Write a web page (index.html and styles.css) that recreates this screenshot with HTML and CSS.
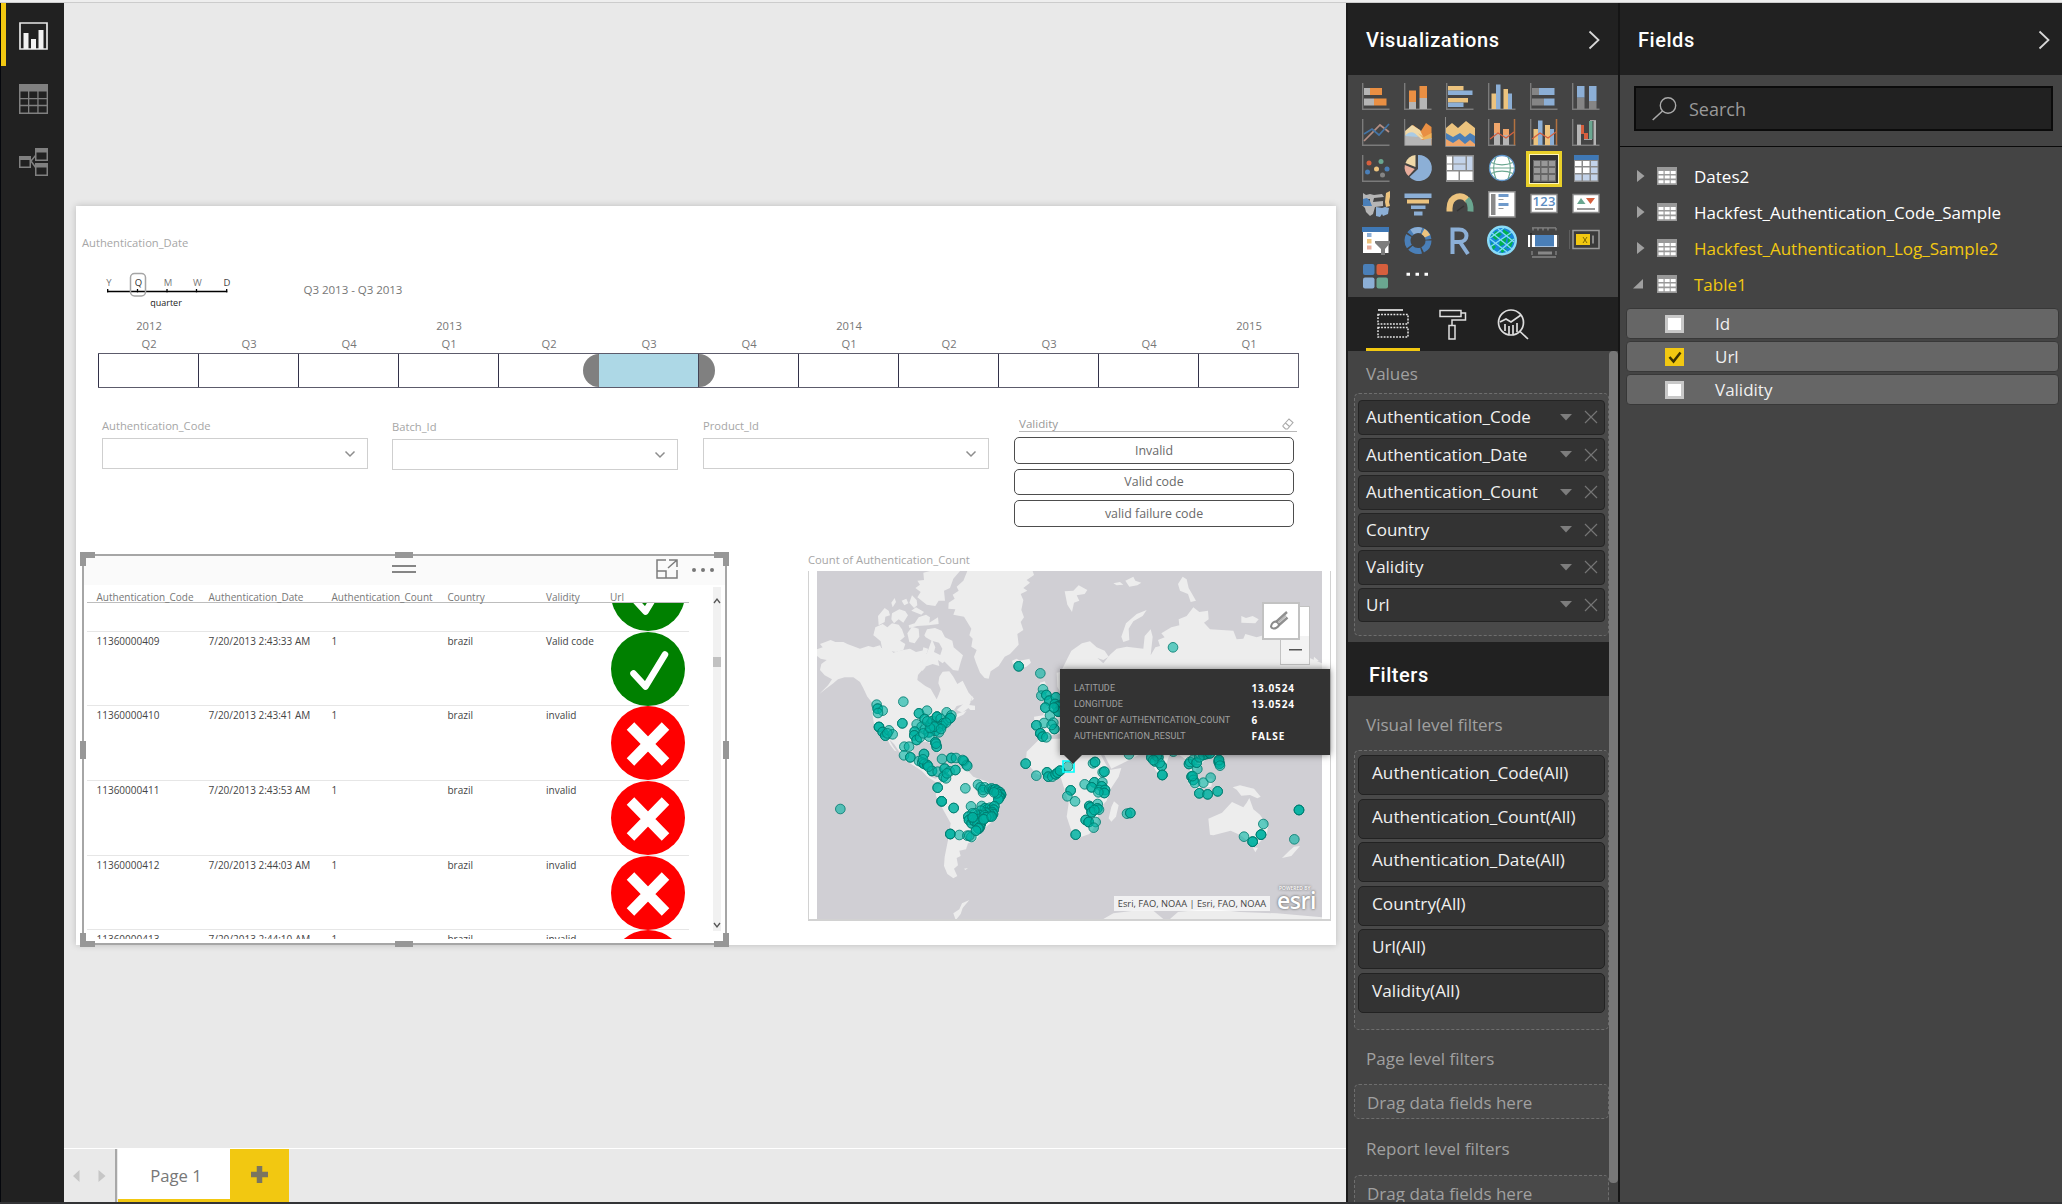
FILE: index.html
```html
<!DOCTYPE html>
<html lang="en">
<head>
<meta charset="utf-8">
<title>Authentication report</title>
<link rel="stylesheet" href="styles.css">
</head>
<body>
<svg class="defs" aria-hidden="true">
  <symbol id="i-axis" viewBox="0 0 28 28"><path d="M.7 0V26.3H27.5" fill="none" stroke="#7b7b7b" stroke-width="1.4"/></symbol>
  <symbol id="i-table" viewBox="0 0 20 18"><path d="M0 0h20v18H0z" fill="#999"/><path d="M1.5 4h5v3h-5zM7.700 4h5v3h-5zM13.700 4h5v3h-5zM1.500 8.600h5v3h-5zM7.700 8.600h5v3h-5zM13.700 8.600h5v3h-5zM1.500 13.200h5v3h-5zM7.700 13.200h5v3h-5zM13.700 13.200h5v3h-5z" fill="#fff"/></symbol>
  <symbol id="i-ok" viewBox="0 0 74 74"><circle cx="37" cy="37" r="37" fill="#008000"/><path d="M22.500 41.500l12 13L54 22.500" fill="none" stroke="#fff" stroke-width="6.500" stroke-linejoin="round" stroke-linecap="round"/></symbol>
  <symbol id="i-bad" viewBox="0 0 74 74"><circle cx="37" cy="37" r="37" fill="#f00"/><path d="M19.500 20l35 36M54.500 20l-35 36" stroke="#fff" stroke-width="10.500"/></symbol>
  <symbol id="i-down" viewBox="0 0 12 8"><path d="M1.500 1.500L6 6l4.500-4.500" fill="none" stroke="#8d8d8d" stroke-width="1.500"/></symbol>
  <symbol id="i-caret" viewBox="0 0 12 7"><path d="M0 0h12L6 6.500z" fill="#7d7d7d"/></symbol>
  <symbol id="i-x" viewBox="0 0 14 14"><path d="M1 1l12 12M13 1L1 13" stroke="#757575" stroke-width="1.200"/></symbol>
  <symbol id="i-next" viewBox="0 0 12 20"><path d="M1.500 1.500L10.500 10l-9 8.500" fill="none" stroke="#d8d8d8" stroke-width="1.800"/></symbol>
</svg>

<div class="topline"></div>
<div class="app">
  <nav class="rail">
    <a class="rail-item active"><svg width="29" height="28" viewBox="0 0 29 28"><path d="M1 1h27v26H1z" fill="none" stroke="#e6e6e6" stroke-width="1.700"/><path d="M4.500 11h5v16h-5zM12 17h5v10h-5zM19.500 8h5v19h-5z" fill="#f2f2f2"/></svg></a>
    <a class="rail-item"><svg width="29" height="30" viewBox="0 0 29 30"><path d="M0 0h29v30H0z" fill="#808080"/><path d="M1.500 7.500H9V14H1.500zM10.300 7.500h8V14h-8zM19.600 7.500h8V14h-8zM1.500 15.200H9v5.600H1.500zM10.300 15.200h8v5.600h-8zM19.600 15.200h8v5.600h-8zM1.500 22.200H9v6.300H1.500zM10.300 22.200h8v6.300h-8zM19.600 22.200h8v6.300h-8z" fill="#212121"/></svg></a>
    <a class="rail-item"><svg width="29" height="28" viewBox="0 0 29 28"><path d="M12 13l5-6M12 13l5 7" stroke="#808080" stroke-width="1.500"/><path d="M0 8h12v12H0zM16 0h13v13H16zM16 15h13v13H16z" fill="#808080"/><path d="M1.500 12h9v6.500h-9zM17.500 4.500h10v7h-10zM17.500 19.500h10v7h-10z" fill="#212121"/></svg></a>
  </nav>

  <main class="workspace">
    <div class="stage">
      <div class="page">
        <section class="timeline">
          <h2 class="vtitle">Authentication_Date</h2>
          <svg class="grain" width="330" height="46" viewBox="98 270 330 46">
            <path d="M107 291.500H227.500M107.700 289v3.500M137.500 289v3.500M167 289v3.500M196.500 289v3.500M226.700 289v3.500" stroke="#000" stroke-width="1.300" fill="none"/>
            <rect x="130.500" y="273.500" width="15" height="22.500" rx="4" fill="none" stroke="#a5a5a5" stroke-width="1.500"/>
            <g font-size="9.500" fill="#777" text-anchor="middle"><text x="109" y="286">Y</text><text x="138.500" y="286" fill="#333">Q</text><text x="168" y="286">M</text><text x="197.500" y="286">W</text><text x="227" y="286" fill="#444">D</text><text x="166" y="306" fill="#222" font-size="9">quarter</text></g>
            <text x="303.500" y="294" font-size="11.600" fill="#777" textLength="99">Q3 2013 - Q3 2013</text>
          </svg>
          <div class="axis years"><span>2012</span><span></span><span></span><span>2013</span><span></span><span></span><span></span><span>2014</span><span></span><span></span><span></span><span>2015</span></div>
          <div class="axis"><span>Q2</span><span>Q3</span><span>Q4</span><span>Q1</span><span>Q2</span><span>Q3</span><span>Q4</span><span>Q1</span><span>Q2</span><span>Q3</span><span>Q4</span><span>Q1</span></div>
          <div class="cells"><i></i><i></i><i></i><i></i><i></i><i class="picked"></i><i></i><i></i><i></i><i></i><i></i><i></i></div>
        </section>

        <section class="slicers">
          <div class="slicer"><h2 class="vtitle">Authentication_Code</h2><div class="dropdown"><svg width="12" height="8"><use href="#i-down"/></svg></div></div>
          <div class="slicer batch"><h2 class="vtitle">Batch_Id</h2><div class="dropdown"><svg width="12" height="8"><use href="#i-down"/></svg></div></div>
          <div class="slicer"><h2 class="vtitle">Product_Id</h2><div class="dropdown"><svg width="12" height="8"><use href="#i-down"/></svg></div></div>
          <div class="chiclets">
            <div class="chic-head"><span>Validity</span><svg width="12" height="12" viewBox="0 0 12 12"><path d="M1 7.500L7 1l4 3.500L5.500 11H3.500L1 8.500zM3.500 5l4 3.500" fill="none" stroke="#aaa" stroke-width="1.100"/></svg></div>
            <button>Invalid</button><button>Valid code</button><button>valid failure code</button>
          </div>
        </section>

        <section class="lower">
          <div class="grid-visual">
            <b class="h tl"></b><b class="h tr"></b><b class="h bl"></b><b class="h br"></b><b class="h tc"></b><b class="h bc"></b><b class="h ml"></b><b class="h mr"></b>
            <div class="vis-bar">
              <svg class="grip" width="24" height="8"><path d="M0 1h24M0 7h24" stroke="#858585" stroke-width="1.800"/></svg>
              <svg class="focus" width="22" height="20" viewBox="0 0 22 20"><path d="M10 1H1v18h20v-8M1 12h9v7M13 1h8v7M21 1l-9 8" fill="none" stroke="#7c7c7c" stroke-width="1.500"/></svg>
              <svg class="more" width="22" height="4"><path d="M2 2h.01M11 2h.01M20 2h.01" stroke="#777" stroke-width="4" stroke-linecap="round"/></svg>
            </div>
            <div class="grid-body">
              <div class="rows">
                <div class="row head"><span>Authentication_Code</span><span>Authentication_Date</span><span>Authentication_Count</span><span>Country</span><span>Validity</span><span>Url</span></div>
                <div class="clip">
                  <div class="row first"><span></span><span></span><span></span><span></span><span></span><svg><use href="#i-ok"/></svg></div>
                  <div class="row"><span>11360000409</span><span>7/20/2013 2:43:33 AM</span><span>1</span><span>brazil</span><span>Valid code</span><svg><use href="#i-ok"/></svg></div>
                  <div class="row"><span>11360000410</span><span>7/20/2013 2:43:41 AM</span><span>1</span><span>brazil</span><span>invalid</span><svg><use href="#i-bad"/></svg></div>
                  <div class="row"><span>11360000411</span><span>7/20/2013 2:43:53 AM</span><span>1</span><span>brazil</span><span>invalid</span><svg><use href="#i-bad"/></svg></div>
                  <div class="row"><span>11360000412</span><span>7/20/2013 2:44:03 AM</span><span>1</span><span>brazil</span><span>invalid</span><svg><use href="#i-bad"/></svg></div>
                  <div class="row"><span>11360000413</span><span>7/20/2013 2:44:10 AM</span><span>1</span><span>brazil</span><span>invalid</span><svg><use href="#i-bad"/></svg></div>
                </div>
              </div>
              <div class="vscroll"><svg width="8" height="6"><path d="M1 5l3-4 3 4" fill="none" stroke="#555" stroke-width="1.300"/></svg><i></i><svg width="8" height="6"><path d="M1 1l3 4 3-4" fill="none" stroke="#555" stroke-width="1.300"/></svg></div>
            </div>
          </div>

          <div class="map-visual">
            <h2 class="vtitle">Count of Authentication_Count</h2>
            <div class="map-frame">
              <svg class="map" width="505" height="348" viewBox="21 33 1515 1044">
                <path d="M21 33h1515v1044H21z" fill="#d0cfd4"/>
                <g fill="#ededed">
                  <path d="M21 268L38 262 30 252 62 240 76 246 100 246 112 252 150 266 175 258 190 262 210 256 214 264 240 268 250 278 268 272 300 266 318 276 345 270 350 282 358 260 366 238 376 262 372 276 392 286 402 270 408 300 398 310 384 300 388 318 368 312 345 320 324 345 322 360 346 378 362 386 380 418 386 404 392 388 385 370 388 350 398 335 418 334 430 350 442 372 458 362 476 398 487 410 480 428 440 438 432 450 440 462 470 452 460 464 430 478 402 500 388 520 372 535 374 545 392 572 386 580 366 552 350 545 330 545 310 560 308 590 322 604 342 592 350 600 338 618 352 628 358 648 376 656 400 645 406 655 380 668 352 650 335 632 300 610 276 596 268 575 252 552 236 536 250 560 260 574 254 572 240 554 226 524 205 512 192 492 186 455 188 430 172 410 160 385 150 366 130 352 104 352 84 358 70 370 48 386 28 402 54 376 66 358 44 346 30 330 34 312 50 300 32 296 21 288z"/>
                  <path d="M440 450l22-20 20-5-4 10 17 2v13h-14l-6-6-18 14zM486 408l6 8-8 8z"/>
                  <path d="M472 33L668 33 672 45 650 60 660 68 640 84 652 92 632 102 640 120 634 150 642 172 632 186 640 210 622 222 626 254 600 282 584 290 566 318 542 334 536 356 524 354 510 338 498 308 492 290 500 270 484 260 488 236 478 226 484 206 462 170 430 164 436 148 415 146 416 128 434 116 428 104 446 92 440 80 460 62z"/>
                  <path d="M340 38L360 33H450L430 56 420 84 402 92 405 122 386 122 376 138 350 134 322 112 332 96 316 84 330 74 322 62 342 60zM298 128l8-22 14 14 2 16-10 8zM275 122l14-6 6 14-12 6zM244 128l10-14 4 12-10 16zM204 168l20-24 12 8 4 14-14 4-2 16-18 10zM246 160l22-12 18 6 8 12-14 22-14-10-14 12-8-12zM296 196l18-6 12-18 22-8 12 8-2 16 26-16 2 20-30 4-34 2-24 6zM304 152l14-10 24 14-8 8zM190 226l6-24 22-10 14 10 14-12 20 4 10 14 8 22-14 12 16 10-6 18-22 6-14-2-18 4-10-14-4-20-16-14zM292 220l14-20 20 6 2 24-14 20-16-4zM343 226l8-18 24-4 20 8 10 20 22 10 4 20 28 24-6 18-8 28-16-2-22-22-18-18 8-24-10-18-22-6-18-10zM316 330l16-18 16 8-10 12-12-4zM340 262l14 4-2 14-16 2z"/>
                  <path d="M606 302l14-6 10 6 28-6 5 12-14 12-18 6-12-8-10-4z"/>
                  <path d="M400 644L424 618 438 610 448 626 470 628 490 650 528 664 550 676 588 700 582 722 562 748 552 780 520 808 512 822 495 844 474 850 468 868 448 872 452 888 440 894 444 916 432 926 438 940 442 948 430 955 412 942 402 918 404 890 410 860 416 830 422 790 400 750 378 708 376 690 392 672z"/>
                  <path d="M462 926l12-2-8 6zM436 1077L430 1060 448 1048 456 1030 478 1020 458 1044 452 1062 440 1077zM880 1077L910 1060 970 1052 1030 1052 1060 1077zM1080 1077L1104 1056 1200 1046 1290 1056 1400 1060 1536 1072 1536 1077z"/>
                  <path d="M688 538L745 536 800 530 860 560 884 606 898 630 934 624 926 650 900 690 890 722 866 748 862 790 838 822 795 838 784 812 770 770 776 730 764 690 752 652 716 652 680 642 660 620 648 600 650 575z"/>
                  <path d="M912 724l14 12-8 34-14 15-8-10 8-34zM870 560L904 626 950 604 996 580 980 540H870z"/>
                  <path d="M672 470L700 466 702 448 720 430 738 420 752 400 742 380 740 338 752 336 770 300 784 272 816 250 840 244 860 262 884 272 896 290 880 300 862 294 880 310 900 284 920 266 950 260 1000 266 1004 228 1022 208 1028 230 1022 286 1036 262 1050 258 1044 240 1064 232 1054 220 1084 202 1108 196 1106 178 1130 168 1150 142 1168 156 1194 152 1196 178 1182 188 1200 208 1270 212 1280 238 1300 236 1306 222 1340 232 1360 226 1410 240 1450 262 1490 290 1536 310V380L1400 480 1330 520 1260 580 1196 590 1158 628 1160 660 1142 640 1130 600 1100 580 1080 580 1066 620 1056 654 1036 630 1018 590 980 570 860 540 760 520 700 530 676 520z"/>
                  <path d="M764 94L790 92 806 76 832 90 824 102 800 106 808 122 792 128 786 156 772 134zM910 70l20-4 10 8-20 2zM946 62l24-12 6 12 18 6-12 8-24 4zM934 230L948 190 980 162 1010 150 998 168 970 184 956 206 958 240 940 246zM1104 72l14-22 12 8 6 26 22 38-16 4-8-24-24-10zM1294 168l14 6 20-6 18 10-10 12-42-2zM690 368l14-4 8 18 8 30-30 12 8-22-12-8z"/>
                  <path d="M1195 776L1236 758 1266 726 1300 742 1310 728 1318 714 1330 748 1350 764 1374 800 1370 824 1346 850 1316 846 1292 826 1262 812 1210 826 1200 824zM1328 862l16 1-8 14zM1452 860l18-2-26 30-28 6 22-22zM1268 682l22-6 42 10 20 24-10 5-22-10-26 2-14-18zM1180 654l28 2-4 24-26 4-12-16zM1128 640l46 48-4 10-34-26z"/>
                  <path d="M1512 290l14 12-16 6z"/>
                </g>
                <g id="dots" fill="#00b3a1" fill-opacity=".6" stroke="#007a6e" stroke-opacity=".9" stroke-width="2.700"></g>
                <path d="M759 603h33v33h-33z" fill="none" stroke="#0ff" stroke-width="5"/>
              </svg>
              <div class="zoomer"><span>+</span><span class="minus"></span></div>
              <div class="brush"><svg width="20" height="20" viewBox="0 0 20 20"><path d="M18 1L7 11M18.500 6.500L9.500 14.500" stroke="#909090" stroke-width="2.400"/><path d="M7.500 10.500c-3 0-5 2.500-5.500 5 .5 2 3 2.500 5 1.500 2-.8 3-2.500 3-4z" fill="none" stroke="#8a8a8a" stroke-width="2"/><path d="M17 4.500l-8 7.500" stroke="#b5b5b5" stroke-width="1.500"/></svg></div>
              <div class="credit">Esri, FAO, NOAA | Esri, FAO, NOAA</div>
              <div class="esri"><small>POWERED BY</small><span>esri</span></div>
              <dl class="tip"><dt>LATITUDE</dt><dd>13.0524</dd><dt>LONGITUDE</dt><dd>13.0524</dd><dt>COUNT OF AUTHENTICATION_COUNT</dt><dd>6</dd><dt>AUTHENTICATION_RESULT</dt><dd>FALSE</dd></dl>
            </div>
          </div>
        </section>
      </div>
    </div>
    <footer class="tabs">
      <div class="arrows"><svg width="34" height="14" viewBox="0 0 34 14"><path d="M6.500 1v12L0 7zM25.500 1v12l7-6z" fill="#c6c6c6"/></svg></div>
      <div class="tab">Page 1</div>
      <div class="add"><svg width="17" height="17"><path d="M8.500 0v17M0 8.500h17" stroke="#7a7560" stroke-width="5.500"/></svg></div>
    </footer>
  </main>

  <aside class="viz">
    <header class="pane-head"><h1>Visualizations</h1><svg width="12" height="20"><use href="#i-next"/></svg></header>
    <div class="gallery">
      <svg viewBox="0 0 28 28"><use href="#i-axis"/><path d="M2 5h6v7H2zM2 15.500h10v7H2z" fill="#b5b5b5"/><path d="M8 5h12v7H8zM12 15.500h12.500v7H12z" fill="#e98f43"/></svg>
      <svg viewBox="0 0 28 28"><use href="#i-axis"/><path d="M5 19h7v7H5zM15.500 15h7.500v11h-7.500z" fill="#b5b5b5"/><path d="M5 7.500h7V19H5zM15.500 3h7.500v12h-7.500z" fill="#e98f43"/></svg>
      <svg viewBox="0 0 28 28"><use href="#i-axis"/><path d="M2 3h15.500v4.500H2zM2 15h20v4.500H2z" fill="#ecc37e"/><path d="M2 7.500h24.500V12H2zM2 19.500h15.500V24H2z" fill="#8cafd6"/></svg>
      <svg viewBox="0 0 28 28"><use href="#i-axis"/><path d="M3.500 10.500H8V26H3.500zM15.500 6H20v20h-4.500z" fill="#ecc37e"/><path d="M8 1.500h4.500V26H8zM20 10.500h4V26h-4z" fill="#8cafd6"/></svg>
      <svg viewBox="0 0 28 28"><use href="#i-axis"/><path d="M2 5h7v7H2zM2 15.500h12v7H2z" fill="#858585"/><path d="M9 5h15.500v7H9zM14 15.500h10.500v7H14z" fill="#8cafd6"/></svg>
      <svg viewBox="0 0 28 28"><use href="#i-axis"/><path d="M5 14.500h7.500V26H5zM17 18h7.500v8H17z" fill="#858585"/><path d="M5 3h7.500v11.500H5zM17 3h7.500v15H17z" fill="#8cafd6"/></svg>

      <svg viewBox="0 0 28 28"><use href="#i-axis"/><path d="M2 22L18 6l9 7" fill="none" stroke="#b58f84" stroke-width="1.700"/><path d="M2 15l8-5 7 6L27 5" fill="none" stroke="#4474a5" stroke-width="1.700"/></svg>
      <svg viewBox="0 0 28 28"><path d="M1 14l8-8 8 6 5-8 5.500 4V26H1z" fill="#e98f43"/><path d="M1 12l7-6 8 5 4 9-19 2z" fill="#f0d9a8"/><path d="M14 14l6 4 7.500-4v6l-6 2z" fill="#eeb35c"/><path d="M1 17c6-6 14 0 17 4l9.500-2v7.500H1z" fill="#b5b5b5"/><path d="M1 17c5-6 10-4 13 1z" fill="#a9cbe6"/><path d="M.7 0V26.500H27.500" fill="none" stroke="#888" stroke-width="1"/></svg>
      <svg viewBox="0 0 28 28"><path d="M0 9l6-5 6 5 8-7 9 7v19H0z" fill="#ecc37e"/><path d="M0 14l7 4 7-4 5 4 5-4 5 3v10H0z" fill="#4a7fb8"/><path d="M0 20l7 4 6-4 6 5 5-4 5 4v3H0z" fill="#efa56a"/><path d="M-.5-2V27.500H29" fill="none" stroke="#888"/></svg>
      <svg viewBox="0 0 28 28"><use href="#i-axis"/><path d="M6 4h6v10H6zM15 10h6v6h-6z" fill="#efa56a"/><path d="M6 14h6v12H6zM15 16h6v10h-6z" fill="#b5b5b5"/><path d="M2 20l8-6 8 5 8-6" fill="none" stroke="#d65f3d" stroke-width="1.300"/><path d="M26.500 0v26" stroke="#b37240" stroke-width="1.500"/></svg>
      <svg viewBox="0 0 28 28"><use href="#i-axis"/><path d="M3.500 10H8v16H3.500zM15 6h5v20h-5z" fill="#ecc37e"/><path d="M8 1.500h4.500V26H8zM20 10h4v16h-4z" fill="#8cafd6"/><path d="M2 20l8-6 8 5 8-6" fill="none" stroke="#d65f3d" stroke-width="1.300"/><path d="M26.500 0v26" stroke="#b37240" stroke-width="1.500"/></svg>
      <svg viewBox="0 0 28 28"><use href="#i-axis"/><path d="M5 6h4v20H5zM21.500 2H24v24h-2.500z" fill="#b5b5b5"/><path d="M9 6h3v8h4v6h-4v-5H9z" fill="#d65f3d"/><path d="M17 2h3.500v18H17z" fill="#6aa690"/><path d="M5 6h4M12 20.500h8M18 1.500h6" stroke="#bbb" stroke-width=".8"/></svg>

      <svg viewBox="0 0 28 28"><use href="#i-axis"/><circle cx="7" cy="8" r="2.500" fill="#d65f3d"/><circle cx="19" cy="6.500" r="2.500" fill="#6aa690"/><circle cx="14.500" cy="14" r="2.500" fill="#ecc37e"/><circle cx="5.500" cy="17" r="2.500" fill="#4a7fb8"/><circle cx="25" cy="14" r="2.500" fill="#4a7fb8"/><circle cx="20.500" cy="20" r="2.500" fill="#858585"/></svg>
      <svg viewBox="0 0 28 28"><path d="M14 0a13 13 0 1 1-8.500 22L14 14z" fill="#8cafd6"/><path d="M11.500 0v12L1.500 8A12 12 0 0 1 11.500 0z" fill="#f0d9a8"/><path d="M.8 10l10 4L4.500 21A12 12 0 0 1 .8 10z" fill="#e8ad9c"/></svg>
      <svg viewBox="0 0 28 28"><path d="M0 0h28v27H0z" fill="#8a8a8a"/><path d="M1 1.500h5v7H1zM1 9.500h5V15H1zM1 16.500h11.500V25H1zM14 16.500h12.500V25H14z" fill="#fff"/><path d="M7.500 1.500h12v7h-12zM7.500 9.500h12V15h-12zM21 1.500h5.500V15H21z" fill="#c3d3ea"/></svg>
      <svg viewBox="0 0 28 28"><circle cx="14" cy="13" r="12.500" fill="#fff" stroke="#5f96cc" stroke-width="1.300"/><path d="M8 2c-3 7-3 15 0 22M20 2c3 7 3 15 0 22M3 7.500c7 3 15 3 22 0M3 18.500c7-3 15-3 22 0M1 13h26" fill="none" stroke="#6aa690" stroke-width="1.100"/></svg>
      <svg class="selected" viewBox="0 0 28 28"><path d="M3 5h23v22H3z" fill="#666"/><path d="M4 6h6v5H4zM11.500 6h6v5h-6zM19 6h6v5h-6zM4 13h6v5H4zM11.500 13h6v5h-6zM19 13h6v5h-6zM4 20h6v5.500H4zM11.500 20h6v5.500h-6zM19 20h6v5.500h-6z" fill="#999"/></svg>
      <svg viewBox="0 0 28 28"><path d="M2 0h24.500v27H2z" fill="#8a8a8a"/><path d="M2 0h24.500v5H2z" fill="#3f78b5"/><path d="M3 6h6.500v5H3zM11 6h6.500v5H11zM3 12.500h6.500V18H3zM11 12.500h6.500V18H11z" fill="#fff"/><path d="M19 6h6.500v5H19zM19 12.500h6.500V18H19zM3 19.500h6.500v6H3zM11 19.500h6.500v6H11zM19 19.500h6.500v6H19z" fill="#c3d3ea"/></svg>

      <svg viewBox="0 0 28 28"><path d="M1 2l3 2 4-1 4 1 8-1 2 3-10 1-1 4 10-1v5l-8 1-2 7-3 2-4-4-1-4-3-3h8V8H1z" fill="#b5b5b5"/><path d="M1 8l4-1 3 3 2 5H1z" fill="#4a7fb8"/><path d="M14 16l6 1 3-1 4 1-1 6-5 2-1-2-2 3-4-1z" fill="#8cafd6"/><path d="M24 2l4-2v6l-1 5 1 4-4 1-1-5z" fill="#ecc37e"/></svg>
      <svg viewBox="0 0 28 28"><path d="M.5 2.500h27V7H.5zM7 14.500h14.500V18H7zM10 20.500h8.500v4H10z" fill="#8cafd6"/><path d="M3 8.500h22v4H3z" fill="#ecc37e"/></svg>
      <svg viewBox="0 0 28 28"><path d="M3.500 20.500v-3C4 4 17 2 22 10" fill="none" stroke="#ecc37e" stroke-width="6"/><path d="M21 8c3 3 4 7 3.500 12.500" fill="none" stroke="#6aa690" stroke-width="6"/><path d="M11 20l7-5" stroke="#333" stroke-width="1.500"/></svg>
      <svg viewBox="0 0 28 28"><path d="M.7.700H27V26H.7z" fill="#fff" stroke="#8a8a8a" stroke-width="1.400"/><path d="M3 3h4.500v21H3z" fill="#8a8a8a"/><path d="M10.500 3h10v3h-10zM10.500 12h10v3h-10z" fill="#6f9acb"/><path d="M10.500 8.500h5M10.500 17.500h5" stroke="#999"/></svg>
      <svg viewBox="0 0 28 28"><path d="M1 3.500h26v18H1z" fill="#fff" stroke="#8a8a8a" stroke-width="1.400"/><text x="2.500" y="15" font-size="13" font-weight="600" fill="#5b8dc2" textLength="23">123</text><path d="M5 18h18" stroke="#777" stroke-width="1.500"/></svg>
      <svg viewBox="0 0 28 28"><path d="M1 3.500h26v18H1z" fill="#fff" stroke="#8a8a8a" stroke-width="1.400"/><path d="M5 13l4-6 4.500 6z" fill="#6aa690"/><path d="M14 7h9l-4.500 6z" fill="#d65f3d"/><path d="M5 18h18" stroke="#777" stroke-width="1.500"/></svg>

      <svg viewBox="0 0 28 28"><path d="M1 0h25.500v26H1z" fill="#fff"/><path d="M0 0h27v5H0z" fill="#3f78b5"/><path d="M5 6h4.500v4H5z" fill="#8cafd6"/><path d="M5 12h4.500v4.500H5z" fill="#ecc37e"/><path d="M5 18.500h4.500v4H5z" fill="#e8ad9c"/><path d="M13 14h15v2l-5 6v6h-4v-6l-6-6z" fill="#7d7d7d"/></svg>
      <svg viewBox="0 0 28 28"><circle cx="14" cy="13.500" r="10.500" fill="none" stroke="#4a7fb8" stroke-width="6" stroke-dasharray="11.600 1.600"/><path d="M8 5a10.500 10.500 0 0 1 9.500-1.500" fill="none" stroke="#8cafd6" stroke-width="6"/><path d="M19 4.500a10.500 10.500 0 0 1 4.500 4.800" fill="none" stroke="#ecc37e" stroke-width="6"/></svg>
      <svg viewBox="0 0 28 28"><path d="M6.500 27V2.500h6.500c10 0 10 12.500 0 12.500H7M14 15l8 12" fill="none" stroke="#8cafd6" stroke-width="4"/></svg>
      <svg viewBox="0 0 28 28"><circle cx="14" cy="13.500" r="15" fill="#8bdcf8"/><circle cx="14" cy="13.500" r="12.500" fill="#1787dc"/><path d="M3 9l5-5 6 3-6 6zM15 2l8 5-2 3-6-3zM12 13l7-3-2 7-6 3zM20 11l6 1-3 8-4 1zM3 15l5 5-3 3zM11 21l8 1-5 4z" fill="#00b050"/><path d="M2 11L16 1M2 20L24 5M9 26l17-14M4 6l20 16M10 2l16 13M2 12l17 13" stroke="#7fdcf7" stroke-width="1.300"/></svg>
      <svg viewBox="0 0 28 28"><path d="M-2 8h31v12H-2z" fill="#fff"/><path d="M5 8h19v11.500H5z" fill="#4a7fb8"/><path d="M1 6v14M28 8v12" fill="none" stroke="#222" stroke-width="1.500"/><path d="M2 .8h24M3 3.500V1M8 3.500V1M13 3.500V1M18 3.500V1M26 3.500V1M2 24v4M26 24v4M2 30h24" fill="none" stroke="#858585" stroke-width="1.300"/><path d="M8 24.500h14v3H8z" fill="#888"/></svg>
      <svg viewBox="0 0 28 28"><path d="M1 3.500h26v18H1z" fill="#3a3a3a" stroke="#999" stroke-width="1.500"/><path d="M4 7h14v11H4z" fill="#f2c811"/><path d="M11 10l4 6M15 10l-4 6" stroke="#806a00"/><path d="M21 8.500v8" stroke="#888" stroke-width="2"/><path d="M-2.500 3v19" stroke="#5f5f5f"/></svg>

      <svg viewBox="0 0 28 28"><rect x="1" y="1" width="11.500" height="11" rx="2" fill="#4a7fb8"/><rect x="14.500" y="1" width="11.500" height="11" rx="2" fill="#d65f3d"/><rect x="1" y="14.500" width="11.500" height="11" rx="2" fill="#8cafd6"/><rect x="14.500" y="14.500" width="11.500" height="11" rx="2" fill="#6aa690"/></svg>
      <svg viewBox="0 0 28 28"><path d="M2.500 9.700h3.500v3H2.500zM11.500 9.700h3.500v3h-3.500zM20.500 9.700h3.500v3h-3.500z" fill="#fff"/></svg>
    </div>
    <div class="modes">
      <span class="mode on"><svg width="32" height="30" viewBox="0 0 32 30"><path d="M1 1h25" stroke="#fff" stroke-width="1.500"/><path d="M1 5.500h30v9.500H1zM1 18.500h30V28H1z" fill="none" stroke="#e6e6e6" stroke-width="1.500" stroke-dasharray="1.800 1.300"/></svg></span>
      <span class="mode"><svg width="28" height="31" viewBox="0 0 28 31"><path d="M1 1.500h21v6H1zM22 4h4.500v7H13v5M10 16.500h6V30h-6z" fill="none" stroke="#e0e0e0" stroke-width="1.500"/></svg></span>
      <span class="mode"><svg width="32" height="31" viewBox="0 0 32 31"><circle cx="14" cy="13.500" r="12.500" fill="none" stroke="#ddd" stroke-width="1.700"/><path d="M3 13l6-3 5 3 10-7M8 15v7M12 17v8M16 16v9M20 14v9M22.500 22L31 30" fill="none" stroke="#ddd" stroke-width="1.700"/></svg></span>
    </div>
    <div class="wells">
      <div class="well-main">
        <h3>Values</h3>
        <div class="well values">
          <div class="pill">Authentication_Code<svg width="12" height="7"><use href="#i-caret"/></svg><svg width="14" height="14"><use href="#i-x"/></svg></div>
          <div class="pill">Authentication_Date<svg width="12" height="7"><use href="#i-caret"/></svg><svg width="14" height="14"><use href="#i-x"/></svg></div>
          <div class="pill">Authentication_Count<svg width="12" height="7"><use href="#i-caret"/></svg><svg width="14" height="14"><use href="#i-x"/></svg></div>
          <div class="pill">Country<svg width="12" height="7"><use href="#i-caret"/></svg><svg width="14" height="14"><use href="#i-x"/></svg></div>
          <div class="pill">Validity<svg width="12" height="7"><use href="#i-caret"/></svg><svg width="14" height="14"><use href="#i-x"/></svg></div>
          <div class="pill">Url<svg width="12" height="7"><use href="#i-caret"/></svg><svg width="14" height="14"><use href="#i-x"/></svg></div>
        </div>
        <h1 class="filters-head">Filters</h1>
        <h3 class="vlf">Visual level filters</h3>
        <div class="well filters">
          <div class="fpill">Authentication_Code(All)</div><div class="fpill">Authentication_Count(All)</div><div class="fpill">Authentication_Date(All)</div><div class="fpill">Country(All)</div><div class="fpill">Url(All)</div><div class="fpill">Validity(All)</div>
        </div>
        <h3 class="plf">Page level filters</h3>
        <div class="well drop">Drag data fields here</div>
        <h3 class="rlf">Report level filters</h3>
        <div class="well drop">Drag data fields here</div>
      </div>
      <div class="pane-scroll"></div>
    </div>
  </aside>

  <aside class="fields">
    <header class="pane-head"><h1>Fields</h1><svg width="12" height="20"><use href="#i-next"/></svg></header>
    <div class="search"><div class="box"><svg width="25" height="24" viewBox="0 0 25 24"><circle cx="16" cy="8.500" r="7.700" fill="none" stroke="#aaa" stroke-width="1.400"/><path d="M10.500 14L.7 23" stroke="#aaa" stroke-width="1.600"/></svg><span>Search</span></div></div>
    <div class="tree">
      <div class="node"><svg class="tw" width="8" height="12"><path d="M0 0l7.500 6L0 12z" fill="#a0a0a0"/></svg><svg width="20" height="18"><use href="#i-table"/></svg>Dates2</div>
      <div class="node"><svg class="tw" width="8" height="12"><path d="M0 0l7.500 6L0 12z" fill="#a0a0a0"/></svg><svg width="20" height="18"><use href="#i-table"/></svg>Hackfest_Authentication_Code_Sample</div>
      <div class="node used"><svg class="tw" width="8" height="12"><path d="M0 0l7.500 6L0 12z" fill="#a0a0a0"/></svg><svg width="20" height="18"><use href="#i-table"/></svg>Hackfest_Authentication_Log_Sample2</div>
      <div class="node used open"><svg class="tw" width="10" height="10"><path d="M10 0v9.500H0z" fill="#a0a0a0"/></svg><svg width="20" height="18"><use href="#i-table"/></svg>Table1</div>
      <div class="field"><i></i>Id</div>
      <div class="field"><i class="checked"><svg width="19" height="18"><path d="M4.500 9l4 4.500L15.500 4.500" fill="none" stroke="#3b3200" stroke-width="2.500"/></svg></i>Url</div>
      <div class="field"><i></i>Validity</div>
    </div>
  </aside>
</div>
<div class="bottomline"></div>
<script src="dots.js"></script>
</body>
</html>
```
FILE: styles.css
```css
* { box-sizing: border-box; }
html, body { margin: 0; height: 100%; overflow: hidden; }
body { display: flex; flex-direction: column; height: 1204px; width: 2062px; background: #e9e9e9; font-family: "Open Sans", "Noto Sans", sans-serif; font-size: 17px; color: #f0f0f0; }
h1, h2, h3, dl, dd { margin: 0; font-weight: 400; }
svg { display: block; flex: none; overflow: visible; }
.defs { position: absolute; width: 0; height: 0; }
.topline { height: 3px; background: #eee; border-bottom: 1px solid #ccc; flex: none; }
.bottomline { height: 2px; background: #333436; flex: none; }
.app { display: flex; height: 1199px; }

/* left rail */
.rail { width: 64px; background: #212121; border-left: 1px solid #05070c; display: flex; flex-direction: column; flex: none; }
.rail-item { height: 63px; display: flex; align-items: center; padding-left: 18px; padding-top: 3px; border-left: 0 solid #f2c811; }
.rail-item.active { border-left-width: 5px; padding-left: 13px; padding-top: 3px; }

/* workspace */
.workspace { width: 1282px; display: flex; flex-direction: column; flex: none; }
.stage { height: 1145px; padding: 203px 0 0 12px; }
.page { width: 1260px; height: 739px; background: #fff; box-shadow: 0 0 7px rgba(0,0,0,.2); }
.vtitle { font-size: 11.2px; line-height: 16px; height: 16px; color: #a6a6a6; white-space: nowrap; }

.timeline { padding: 29px 0 0 22px; height: 182px; color: #777; }
.timeline .vtitle { margin-left: -16px; }
.grain { margin-top: 19px; margin-bottom: 1px; }
.axis { display: grid; grid-template-columns: repeat(12, 100px); text-align: center; font-size: 11.2px; line-height: 18px; height: 18px; padding-left: 1px; }
.cells { display: grid; grid-template-columns: repeat(12, 100px); width: 1201px; height: 35px; border: 1px solid #5c5b6b; border-left: 0; }
.cells i { border-left: 1px solid #33324a; }
.picked { background: #add8e6; position: relative; }
.picked::before, .picked::after { content: ""; position: absolute; top: 0; bottom: 0; width: 16px; background: #808080; }
.picked::before { right: 100%; border-radius: 16px 0 0 16px / 50% 0 0 50%; }
.picked::after { left: 100%; border-radius: 0 16px 16px 0 / 0 50% 50% 0; border-left: 1px solid #445; }

.slicers { display: flex; height: 164px; padding: 30px 0 0 26px; align-items: flex-start; }
.slicer { width: 286px; margin-right: 25px; }
.slicer:first-child { width: 266px; }
.slicer.batch { padding-top: 1px; margin-right: 25px; margin-left: -1px; }
.dropdown { height: 31px; border: 1px solid #cfcfcf; margin-top: 4px; display: flex; justify-content: flex-end; align-items: center; padding-right: 11px; }
.chiclets { width: 280px; }
.chic-head { display: flex; justify-content: space-between; align-items: center; height: 16px; margin: -2px -3px 5px 5px; border-bottom: 1.5px solid #b8b8b8; color: #999; font-size: 11.6px; padding-right: 3px; }
.chiclets button { display: block; width: 100%; height: 26.5px; margin: 0 0 5px; padding: 0; background: #fff; border: 1.3px solid #4d4d4d; border-radius: 5px; font: 12.4px/23px "Open Sans", sans-serif; color: #6a6a6a; }

.lower { display: flex; padding-left: 6px; }
.grid-visual { position: relative; width: 645px; height: 391px; margin-top: 2px; border: 2px solid #a6a6a6; }
.h { position: absolute; }
.tl, .tr, .bl, .br { width: 15px; height: 14px; border: 0 solid #979797; }
.tl { left: -4px; top: -4px; border-width: 6px 0 0 6px; }
.tr { right: -4px; top: -4px; border-width: 6px 6px 0 0; }
.bl { left: -4px; bottom: -4px; border-width: 0 0 6px 6px; }
.br { right: -4px; bottom: -4px; border-width: 0 6px 6px 0; }
.tc, .bc { width: 18px; height: 6px; left: 311px; background: #979797; }
.tc { top: -4px; } .bc { bottom: -4px; }
.ml, .mr { width: 6px; height: 18px; top: 185px; background: #979797; }
.ml { left: -4px; } .mr { right: -4px; }
.vis-bar { height: 29px; background: #fafafa; display: flex; align-items: flex-start; }
.grip { margin: 9px 0 0 308px; }
.focus { margin: 3px 0 0 240px; }
.more { margin: 12px 0 0 14px; }
.grid-body { display: flex; height: 354px; }
.rows { width: 602px; margin-left: 3px; font-size: 10px; color: #444; }
.row { display: grid; grid-template-columns: 112px 123px 116px 98.500px 64px 77px; padding-left: 9.5px; height: 74.7px; border-bottom: 1px solid #e6e6e6; white-space: nowrap; line-height: 14px; padding-top: 2px; }
.row.head { height: 18px; border-bottom: 1px solid #bdbdbd; padding-top: 5px; color: #777; line-height: 14px; }
.clip { height: 336px; overflow: hidden; }
.row.first { margin-top: -46px; }
.row svg { width: 74px; height: 74px; margin: -2px 0 0 1px; }
.vscroll { width: 8px; margin: 2px 0 0 23.5px; background: #f1f1f1; display: flex; flex-direction: column; height: 344px; padding: 11px 0 3px; }
.vscroll i { height: 10px; background: #c1c1c1; margin: 53px 0 auto; }

.map-visual { margin-left: 81px; }
.map-frame { position: relative; width: 523px; height: 350px; padding: 0 8px; border: 1px solid #d2d2d2; border-top: 0; border-bottom-width: 2px; margin-top: 3px; }
.map-visual .vtitle { font-size: 11.25px; }
.zoomer { position: absolute; left: 471px; top: 35px; width: 30px; height: 59px; border: 1.5px solid #c2c2c2; background: #fff; color: #888; display: flex; flex-direction: column; }
.zoomer span { flex: 1; text-align: center; line-height: 28px; }
.zoomer .minus { background: #f3f3f3 linear-gradient(#555, #555) center / 13px 1.5px no-repeat; }
.brush { position: absolute; left: 453px; top: 31px; width: 38px; height: 38px; background: #fff; border: 2px solid #c2c2c2; padding: 7px 0 0 5px; }
.credit { position: absolute; left: 305px; top: 325px; width: 156px; height: 15px; background: rgba(255,255,255,.7); color: #444; font-size: 9.3px; line-height: 15px; text-align: center; white-space: nowrap; }
.esri { position: absolute; left: 468px; top: 314px; width: 42px; color: #fff; font-weight: 600; text-shadow: 0 0 2px #777, 0 0 3px #888; }
.esri span { display: block; font-size: 23px; line-height: 16px; letter-spacing: -.5px; margin-top: 1px; }
.esri small { display: block; font-size: 4.8px; line-height: 6px; letter-spacing: .1px; margin-left: 2px; }
.tip { position: absolute; left: 251px; top: 98px; width: 270px; height: 86px; padding: 11px 0 0 14px; background: #333; box-shadow: 0 0 7px rgba(0,0,0,.5); display: grid; grid-template-columns: 177.500px 1fr; grid-auto-rows: 15.9px; line-height: 16px; font-size: 9px; }
.tip::after { content: ""; position: absolute; left: 3px; top: 85px; border: 10px solid transparent; border-top-color: #333; border-bottom: 0; }
.tip dt { font-family: Roboto, sans-serif; color: #a0a0a0; white-space: nowrap; letter-spacing: .12px; }
.tip dd { font-size: 10px; font-weight: 700; color: #fff; letter-spacing: .9px; }

.tabs { height: 54px; border-top: 1px solid #fff; display: flex; }
.arrows { width: 53px; border-right: 2px solid #a8a8a8; padding: 20px 0 0 9px; }
.tab { width: 112px; margin-left: 1px; background: #fff; border-bottom: 3px solid #f2c811; color: #777; font-size: 16.7px; font-weight: 500; text-align: center; line-height: 54px; padding-left: 4px; }
.add { width: 59px; background: #f2c811; display: flex; align-items: center; justify-content: center; padding-bottom: 3px; }

/* right panes */
.viz { width: 274px; border-left: 2px solid #1a1a1a; border-right: 2px solid #151515; background: #444; flex: none; display: flex; flex-direction: column; overflow: hidden; }
.fields { width: 442px; background: #444; flex: none; }
.pane-head { height: 72px; background: #212121; display: flex; align-items: center; justify-content: space-between; padding: 2px 18px 0 18px; flex: none; }
.fields .pane-head { padding-right: 12px; }
.pane-head svg { margin-bottom: 1px; }
h1 { font-family: Roboto, sans-serif; font-size: 20px; font-weight: 500; letter-spacing: .55px; color: #fff; }
.gallery { height: 222px; display: grid; grid-template-columns: repeat(6, 42px); grid-auto-rows: 36px; padding: 8px 0 0 13.5px; flex: none; }
.gallery svg { width: 28px; height: 28px; }
.gallery .selected { outline: 3px solid #e8cf28; outline-offset: 1px; background: #333; box-shadow: 0 0 0 1px #fff7b8; }
.modes { height: 54px; background: #212121; display: flex; flex: none; padding-left: 18px; gap: 6px; }
.mode { width: 54px; display: flex; justify-content: center; padding-top: 12px; border-bottom: 3px solid transparent; }
.mode.on { border-color: #f2c811; }
.wells { display: flex; height: 851px; overflow: hidden; }
.well-main { width: 261px; }
.pane-scroll { width: 9px; height: 832px; background: #777; border-radius: 4px; }
h3 { font-size: 17px; line-height: 24px; color: #a0a0a0; padding-left: 18px; }
.values { margin-top: 7px; }
.well-main > h3:first-child { padding-top: 11px; }
.well { margin-left: 6px; width: 255px; border: 1.5px dashed #6e6e6e; border-radius: 5px; background: #494949; }
.well.values { height: 243px; padding: 6px 3px; }
.pill { height: 34.5px; margin-bottom: 3px; border: 1.5px solid #242424; border-radius: 4px; background: #333; line-height: 32px; padding-left: 7px; display: flex; align-items: center; }
.pill svg:first-of-type { margin-left: auto; margin-right: 12px; }
.pill svg:last-of-type { margin-right: 6px; }
.filters-head { height: 54px; background: #212121; margin-top: 6px; padding: 7px 0 0 21px; line-height: 52px; }
.vlf { padding-top: 17px; height: 53px; }
.well.filters { height: 280px; padding: 4px 3px; margin-top: 1px; }
.fpill { height: 40px; margin-bottom: 3.5px; border: 1.5px solid #222; border-radius: 5px; background: #333; line-height: 33px; padding-left: 13px; font-size: 17.2px; }
.plf { padding-top: 17px; height: 54px; }
.well.drop { height: 35px; line-height: 36px; padding-left: 12px; color: #a0a0a0; }
.rlf { padding-top: 18px; height: 56px; }

.search { padding: 11px 9px 0 14px; height: 72px; border-bottom: 1.5px solid #0a0a0a; }
.box { height: 45px; background: #212121; border: 2px solid #0b0b0b; display: flex; align-items: center; padding-left: 16px; gap: 12px; font-size: 18px; color: #999; }
.tree { padding-top: 11px; }
.node { height: 36px; display: flex; align-items: center; padding-left: 17px; color: #fff; white-space: nowrap; }
.node .tw { margin-right: 12px; }
.node.open { padding-left: 13px; }
.node.open .tw { margin-right: 14px; }
.node svg:nth-child(2) { margin-right: 17px; }
.node.used { color: #f2c811; }
.field { height: 31.5px; margin: 0 3px 1.5px 6px; background: #666; border: 1px solid #383838; border-radius: 4px; display: flex; align-items: center; padding-left: 38px; gap: 31px; }
.field:nth-child(5) { margin-top: 5.5px; }
.field i { width: 19px; height: 18px; border: 3px solid #c8c8c8; background: #fff; margin-top: 2px; }
.field i.checked { border: 0; background: #f2c811; }
```
FILE: dots.js
```js
// Marker centres in map units: x, y, and how many readings are stacked there.
var markers = [
  // North America
  [280,425],[277,490,2],[200,434],[203,446,2],[218,452],[204,459],[207,501,3],[218,516,2],[226,527,2],[237,511],[248,523],[232,520],
  [327,460,2],[351,452],[344,477,2],[320,493],[335,500],[314,515,2],[313,526,2],[320,540,2],[330,532],[345,507],[356,517,2],[362,492,2],[368,483,2],[381,470,3],[392,476],[400,490,2],[395,498,2],[384,503,2],[376,513,2],[387,517],[358,530],[340,520],[410,457],[424,466],[415,479],[421,474,2],[408,488],[372,500,2],[360,504],[352,484],[393,507],[376,547,2],[380,560,2],[378,551],
  [283,560],[297,560],[282,586],[301,592,2],[342,582,2],[327,603],[337,608,2],[343,612,2],[352,615,2],[366,633,2],[383,635],[396,597],[339,598],[355,620],[404,626,2],[401,650,2],[408,655],[419,634],[436,630,2],[424,594,2],[438,594],[461,603,2],[470,615],[472,618],[458,600],[411,640],
  // South America
  [383,683,2],[395,724,3],[431,744,2],[466,685],[483,739],[421,822,3],[448,825],[472,827],[484,831],[478,827],
  [504,674],[512,682],[519,697],[524,682],[519,690],[538,687],[545,685],[549,690,2],[553,692],[556,688,2],[560,695],[562,692,2],[566,700],[570,697,2],[573,704,3],[570,709],[568,712,3],[565,718,2],[560,700],[552,697],
  [515,738],[525,745,2],[532,748],[540,743],[546,745],[553,739,2],[551,749,2],[546,756,2],[549,762,2],[545,768],[541,768,3],[538,760],[534,764,2],[530,770],[527,758,2],[520,762,2],[512,752],[516,770,3],[508,765,2],[500,768,2],[495,760],[487,760],[475,770,2],[477,780,2],[485,790,2],[490,780],[495,785,2],[500,778],[505,780,3],[510,776],[514,783,2],[518,779],[512,791,3],[509,788],[505,796,3],[502,790],[510,800,2],[507,806],[505,805,3],[524,766],[536,770],[528,772,2],[521,778,2],[545,770],[488,772,2],[498,812,2],
  // Atlantic and Europe
  [91,747],[626,319,2],[691,340],[699,388],[694,407],[709,405,2],[718,422,2],[706,443,2],[720,466],[738,412,2],[735,432,2],[743,440,3],[745,455,3],[732,443,2],[702,489],[679,496,2],[730,488],[733,507,2],[691,520,3],[698,530,2],[709,532],[725,495],
  // Africa
  [647,611,2],[679,647],[711,637,2],[715,650,2],[727,650],[737,643,2],[743,638,2],[750,632,2],[774,619],
  [849,610],[855,606,2],[878,637],[883,635,2],[824,673],[853,667,2],[845,682,2],[877,667],[875,679,2],[868,690],[885,690,2],[883,699,2],[865,697],[782,691,2],[772,709],[795,724],[838,738,2],[842,742,2],[863,732],[862,745,2],[845,757,3],[867,749],[853,750],[827,780,2],[836,786,3],[857,786],[851,803],[797,824,2],[951,761],[961,759,2],
  // Asia
  [1089,262],[957,583],[1024,592,2],[1035,604,2],[1045,592,2],[1055,618,2],[1049,609],[1057,645,3],[1040,588],[1090,575],[1030,600],
  [1137,612,2],[1140,606],[1150,599],[1162,627],[1160,608,2],[1145,650,3],[1150,660,2],[1155,669],[1148,648],[1180,668],[1202,653],[1168,700,2],[1193,703,2],[1223,694,2],[1226,605,2],[1229,611,2],[1227,600,2],[1230,617],[1190,582,2],[1180,585,2],[1200,580,2],[1168,592],
  // Oceania
  [1360,792],[1353,824,3],[1302,830],[1328,845,3],[1467,750,3],[1453,838]
];
var layer = document.getElementById("dots");
markers.forEach(function (m) {
  for (var n = m[2] || 1; n > 0; n--) {
    var c = document.createElementNS("http://www.w3.org/2000/svg", "circle");
    c.setAttribute("cx", m[0]);
    c.setAttribute("cy", m[1]);
    c.setAttribute("r", 14.5);
    layer.appendChild(c);
  }
});
```
